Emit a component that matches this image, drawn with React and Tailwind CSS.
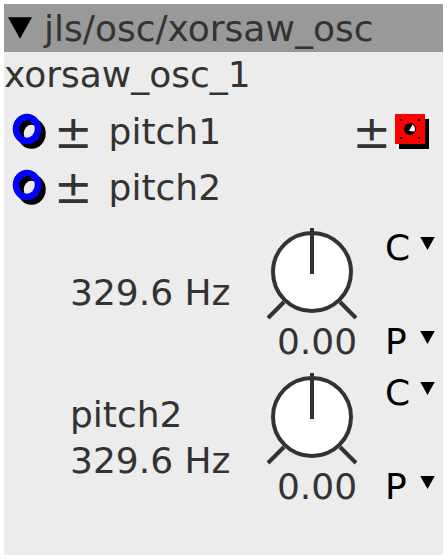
import React from "react"

const Port = () => (
  <svg width="38" height="40" viewBox="0 0 38 40" className="shrink-0">
    <ellipse cx="19.5" cy="21.5" rx="11" ry="12" fill="none" stroke="#000" strokeWidth="6.5" />
    <ellipse cx="15" cy="17" rx="11" ry="12" fill="none" stroke="#0000ff" strokeWidth="6.5" />
  </svg>
)

const Tri = ({ w, h }) => (
  <svg width={w} height={h} viewBox="0 0 10 9" className="shrink-0">
    <polygon points="0,0 10,0 5,9" fill="#000" />
  </svg>
)

const Knob = () => (
  <svg width="100" height="96" viewBox="0 0 100 96" className="shrink-0">
    <line x1="22" y1="76" x2="6" y2="92" stroke="#333" strokeWidth="4" />
    <line x1="78" y1="76" x2="94" y2="92" stroke="#333" strokeWidth="4" />
    <circle cx="50" cy="46" r="39" fill="#fff" stroke="#333" strokeWidth="4" />
    <line x1="50" y1="2" x2="50" y2="48" stroke="#333" strokeWidth="4" />
  </svg>
)

const Pick = ({ letter }) => (
  <div className="flex items-start text-black leading-[36px] h-[36px]">
    <span className="w-[35px]">{letter}</span>
    <div className="mt-[7px]">
      <Tri w={15} h={13} />
    </div>
  </div>
)

const KnobBlock = ({ label, value }) => (
  <div className="flex items-center h-[134px]">
    <div className="w-[258px] pl-[66px] leading-[46px]">
      {label && <div>{label}</div>}
      <div>{value}</div>
    </div>
    <div className="flex flex-col items-center w-[100px] h-[134px]">
      <Knob />
      <div className="mt-[2px] leading-[36px] pl-[10px]">0.00</div>
    </div>
    <div className="flex flex-col justify-between h-[134px] pl-[23px] pt-[4px]">
      <Pick letter="C" />
      <Pick letter="P" />
    </div>
  </div>
)

export default function App() {
  return (
    <div
      className="w-[448px] h-[560px] bg-white p-1 text-[#333] text-[36px]"
      style={{ fontFamily: '"DejaVu Sans", sans-serif' }}
    >
      <div className="w-[439px] h-[551px] bg-[#ececec] flex flex-col">
        <div className="h-12 bg-[#999999] flex items-center pl-[4px] shrink-0 overflow-hidden">
          <Tri w={24} h={22} />
          <span className="ml-[12px] leading-[50px] h-12">jls/osc/xorsaw_osc</span>
        </div>
        <div className="h-[52px] leading-[45px] shrink-0">xorsaw_osc_1</div>
        <div className="flex items-center h-[56px] pl-[8px] leading-[56px] shrink-0">
          <Port />
          <span className="ml-[4px] text-[46px] leading-[56px]">±</span>
          <span className="ml-[16px]">pitch1</span>
          <span className="ml-auto text-[46px] leading-[56px]">±</span>
          <svg width="36" height="36" viewBox="0 0 36 36" className="ml-[4px] mr-[12px] shrink-0">
            <rect x="4" y="5" width="30" height="30" fill="#000" />
            <rect x="0" y="0" width="30" height="30" fill="#ff0000" />
            <rect x="5" y="5" width="2" height="2" fill="#000" />
            <rect x="23" y="5" width="2" height="2" fill="#000" />
            <rect x="5" y="23" width="2" height="2" fill="#000" />
            <rect x="23" y="23" width="2" height="2" fill="#000" />
            <circle cx="15" cy="15" r="6" fill="#000" />
            <path d="M17.5 10.5 A6 6 0 0 1 19.5 17.5 L14 17 Z" fill="#fff" />
          </svg>
        </div>
        <div className="flex items-center h-[55px] pl-[8px] leading-[55px] shrink-0">
          <Port />
          <span className="ml-[4px] text-[46px] leading-[55px]">±</span>
          <span className="ml-[16px]">pitch2</span>
        </div>
        <div className="mt-[11px]">
          <KnobBlock value="329.6 Hz" />
        </div>
        <div className="mt-[11px]">
          <KnobBlock label="pitch2" value="329.6 Hz" />
        </div>
      </div>
    </div>
  )
}
